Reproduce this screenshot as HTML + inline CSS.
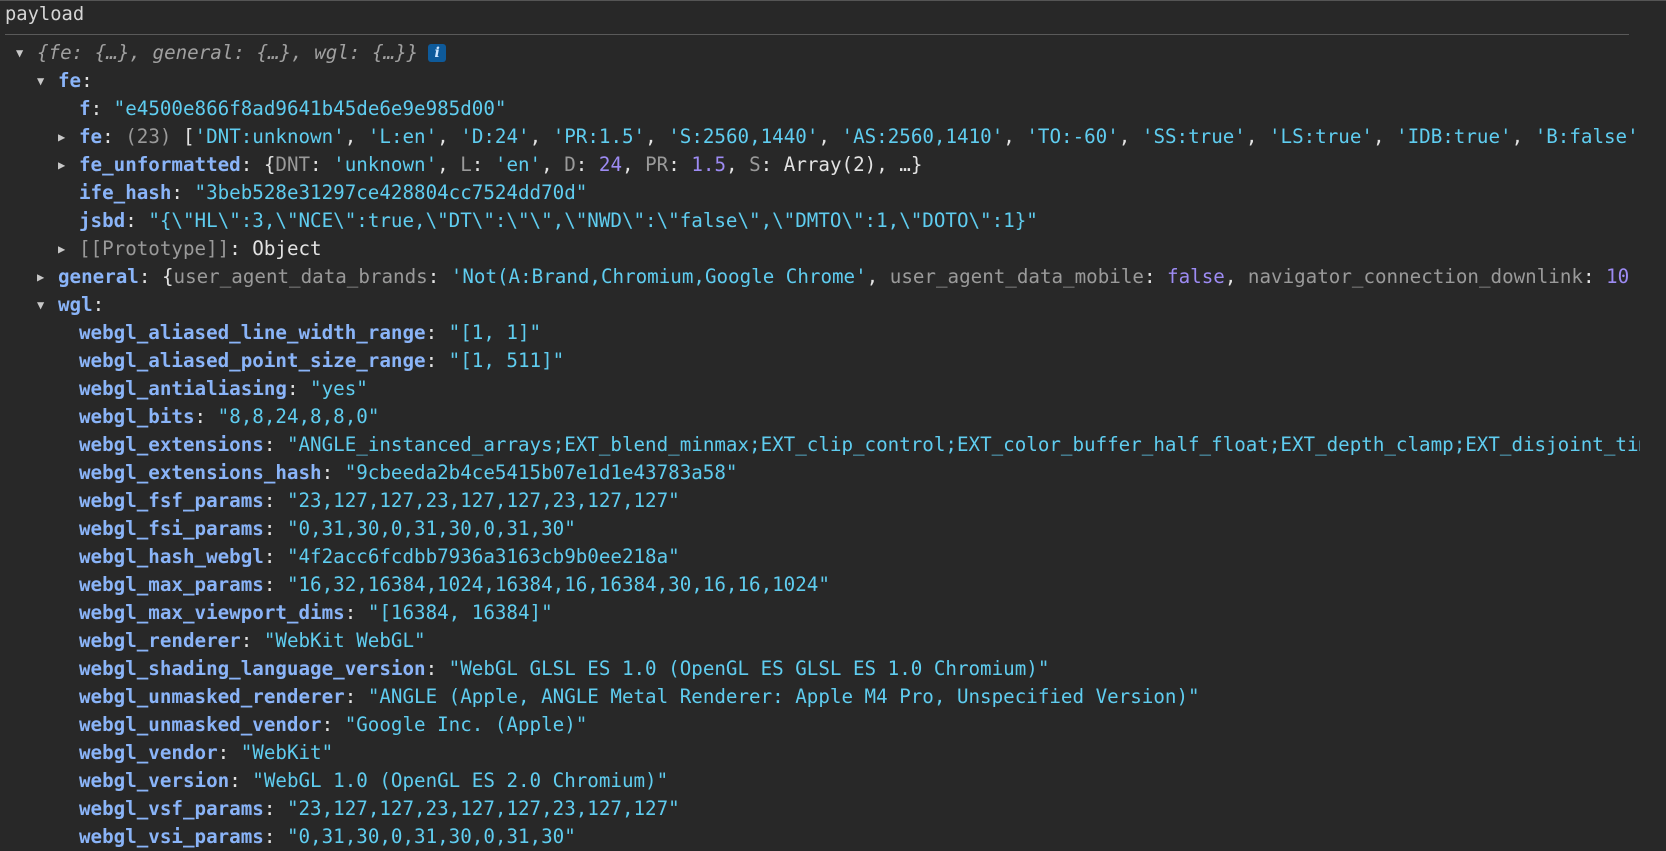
<!DOCTYPE html>
<html><head><meta charset="utf-8"><style>
html,body{margin:0;padding:0;background:#282828;width:1666px;height:851px;overflow:hidden}
.top{position:absolute;left:0;top:0;width:1666px;height:1px;background:#555}
.hdr{position:absolute;left:5px;top:4px;font:18.8px "DejaVu Sans Mono","Liberation Mono",monospace;color:#d6d6d6}
.sep{position:absolute;left:5px;top:34px;width:1624px;height:1px;background:#5a5a5a}
.wrap{position:absolute;left:0;top:39px;width:1640px;height:812px;overflow:hidden}
.r{position:absolute;white-space:pre;font:19.2px/28px "DejaVu Sans Mono","Liberation Mono",monospace;color:#e3e3e3;height:28px}
.k{color:#8ab4f8;font-weight:bold}
.s{color:#5fcdf0}
.g{color:#9a9a9a}
.n{color:#9d8bf3}
.i{font-style:italic;color:#a0a0a0}
.ar{display:inline-block;width:21px;color:#c8c8c8;font-size:12px;vertical-align:top}
.info{display:inline-block;background:#0e5a9a;color:#cfe6ff;font:italic bold 14px "DejaVu Serif",serif;width:18px;height:18px;line-height:18px;text-align:center;border-radius:3px;vertical-align:2px;margin-left:10px}
</style></head><body>
<div class="top"></div>
<div class="hdr">payload</div>
<div class="sep"></div>
<div class="wrap">
<div class="r" style="top:0;left:16px"><span class="ar">▼</span><span class="i">{fe: {…}, general: {…}, wgl: {…}}</span><span class="info">i</span></div>
<div class="r" style="top:28px;left:37px"><span class="ar">▼</span><span class="k">fe</span>:</div>
<div class="r" style="top:56px;left:79px"><span class="k">f</span>: <span class="s">"e4500e866f8ad9641b45de6e9e985d00"</span></div>
<div class="r" style="top:84px;left:58px"><span class="ar">▶</span><span class="k">fe</span>: <span class="g">(23)</span> [<span class="s">'DNT:unknown'</span>, <span class="s">'L:en'</span>, <span class="s">'D:24'</span>, <span class="s">'PR:1.5'</span>, <span class="s">'S:2560,1440'</span>, <span class="s">'AS:2560,1410'</span>, <span class="s">'TO:-60'</span>, <span class="s">'SS:true'</span>, <span class="s">'LS:true'</span>, <span class="s">'IDB:true'</span>, <span class="s">'B:false'</span></div>
<div class="r" style="top:112px;left:58px"><span class="ar">▶</span><span class="k">fe_unformatted</span>: {<span class="g">DNT</span>: <span class="s">'unknown'</span>, <span class="g">L</span>: <span class="s">'en'</span>, <span class="g">D</span>: <span class="n">24</span>, <span class="g">PR</span>: <span class="n">1.5</span>, <span class="g">S</span>: Array(2), …}</div>
<div class="r" style="top:140px;left:79px"><span class="k">ife_hash</span>: <span class="s">"3beb528e31297ce428804cc7524dd70d"</span></div>
<div class="r" style="top:168px;left:79px"><span class="k">jsbd</span>: <span class="s">"{\"HL\":3,\"NCE\":true,\"DT\":\"\",\"NWD\":\"false\",\"DMTO\":1,\"DOTO\":1}"</span></div>
<div class="r" style="top:196px;left:58px"><span class="ar">▶</span><span class="g">[[Prototype]]</span>: Object</div>
<div class="r" style="top:224px;left:37px"><span class="ar">▶</span><span class="k">general</span>: {<span class="g">user_agent_data_brands</span>: <span class="s">'Not(A:Brand,Chromium,Google Chrome'</span>, <span class="g">user_agent_data_mobile</span>: <span class="n">false</span>, <span class="g">navigator_connection_downlink</span>: <span class="n">10</span></div>
<div class="r" style="top:252px;left:37px"><span class="ar">▼</span><span class="k">wgl</span>:</div>
<div class="r" style="top:280px;left:79px"><span class="k">webgl_aliased_line_width_range</span>: <span class="s">"[1, 1]"</span></div>
<div class="r" style="top:308px;left:79px"><span class="k">webgl_aliased_point_size_range</span>: <span class="s">"[1, 511]"</span></div>
<div class="r" style="top:336px;left:79px"><span class="k">webgl_antialiasing</span>: <span class="s">"yes"</span></div>
<div class="r" style="top:364px;left:79px"><span class="k">webgl_bits</span>: <span class="s">"8,8,24,8,8,0"</span></div>
<div class="r" style="top:392px;left:79px"><span class="k">webgl_extensions</span>: <span class="s">"ANGLE_instanced_arrays;EXT_blend_minmax;EXT_clip_control;EXT_color_buffer_half_float;EXT_depth_clamp;EXT_disjoint_timer_query"</span></div>
<div class="r" style="top:420px;left:79px"><span class="k">webgl_extensions_hash</span>: <span class="s">"9cbeeda2b4ce5415b07e1d1e43783a58"</span></div>
<div class="r" style="top:448px;left:79px"><span class="k">webgl_fsf_params</span>: <span class="s">"23,127,127,23,127,127,23,127,127"</span></div>
<div class="r" style="top:476px;left:79px"><span class="k">webgl_fsi_params</span>: <span class="s">"0,31,30,0,31,30,0,31,30"</span></div>
<div class="r" style="top:504px;left:79px"><span class="k">webgl_hash_webgl</span>: <span class="s">"4f2acc6fcdbb7936a3163cb9b0ee218a"</span></div>
<div class="r" style="top:532px;left:79px"><span class="k">webgl_max_params</span>: <span class="s">"16,32,16384,1024,16384,16,16384,30,16,16,1024"</span></div>
<div class="r" style="top:560px;left:79px"><span class="k">webgl_max_viewport_dims</span>: <span class="s">"[16384, 16384]"</span></div>
<div class="r" style="top:588px;left:79px"><span class="k">webgl_renderer</span>: <span class="s">"WebKit WebGL"</span></div>
<div class="r" style="top:616px;left:79px"><span class="k">webgl_shading_language_version</span>: <span class="s">"WebGL GLSL ES 1.0 (OpenGL ES GLSL ES 1.0 Chromium)"</span></div>
<div class="r" style="top:644px;left:79px"><span class="k">webgl_unmasked_renderer</span>: <span class="s">"ANGLE (Apple, ANGLE Metal Renderer: Apple M4 Pro, Unspecified Version)"</span></div>
<div class="r" style="top:672px;left:79px"><span class="k">webgl_unmasked_vendor</span>: <span class="s">"Google Inc. (Apple)"</span></div>
<div class="r" style="top:700px;left:79px"><span class="k">webgl_vendor</span>: <span class="s">"WebKit"</span></div>
<div class="r" style="top:728px;left:79px"><span class="k">webgl_version</span>: <span class="s">"WebGL 1.0 (OpenGL ES 2.0 Chromium)"</span></div>
<div class="r" style="top:756px;left:79px"><span class="k">webgl_vsf_params</span>: <span class="s">"23,127,127,23,127,127,23,127,127"</span></div>
<div class="r" style="top:784px;left:79px"><span class="k">webgl_vsi_params</span>: <span class="s">"0,31,30,0,31,30,0,31,30"</span></div>
</div>
</body></html>
